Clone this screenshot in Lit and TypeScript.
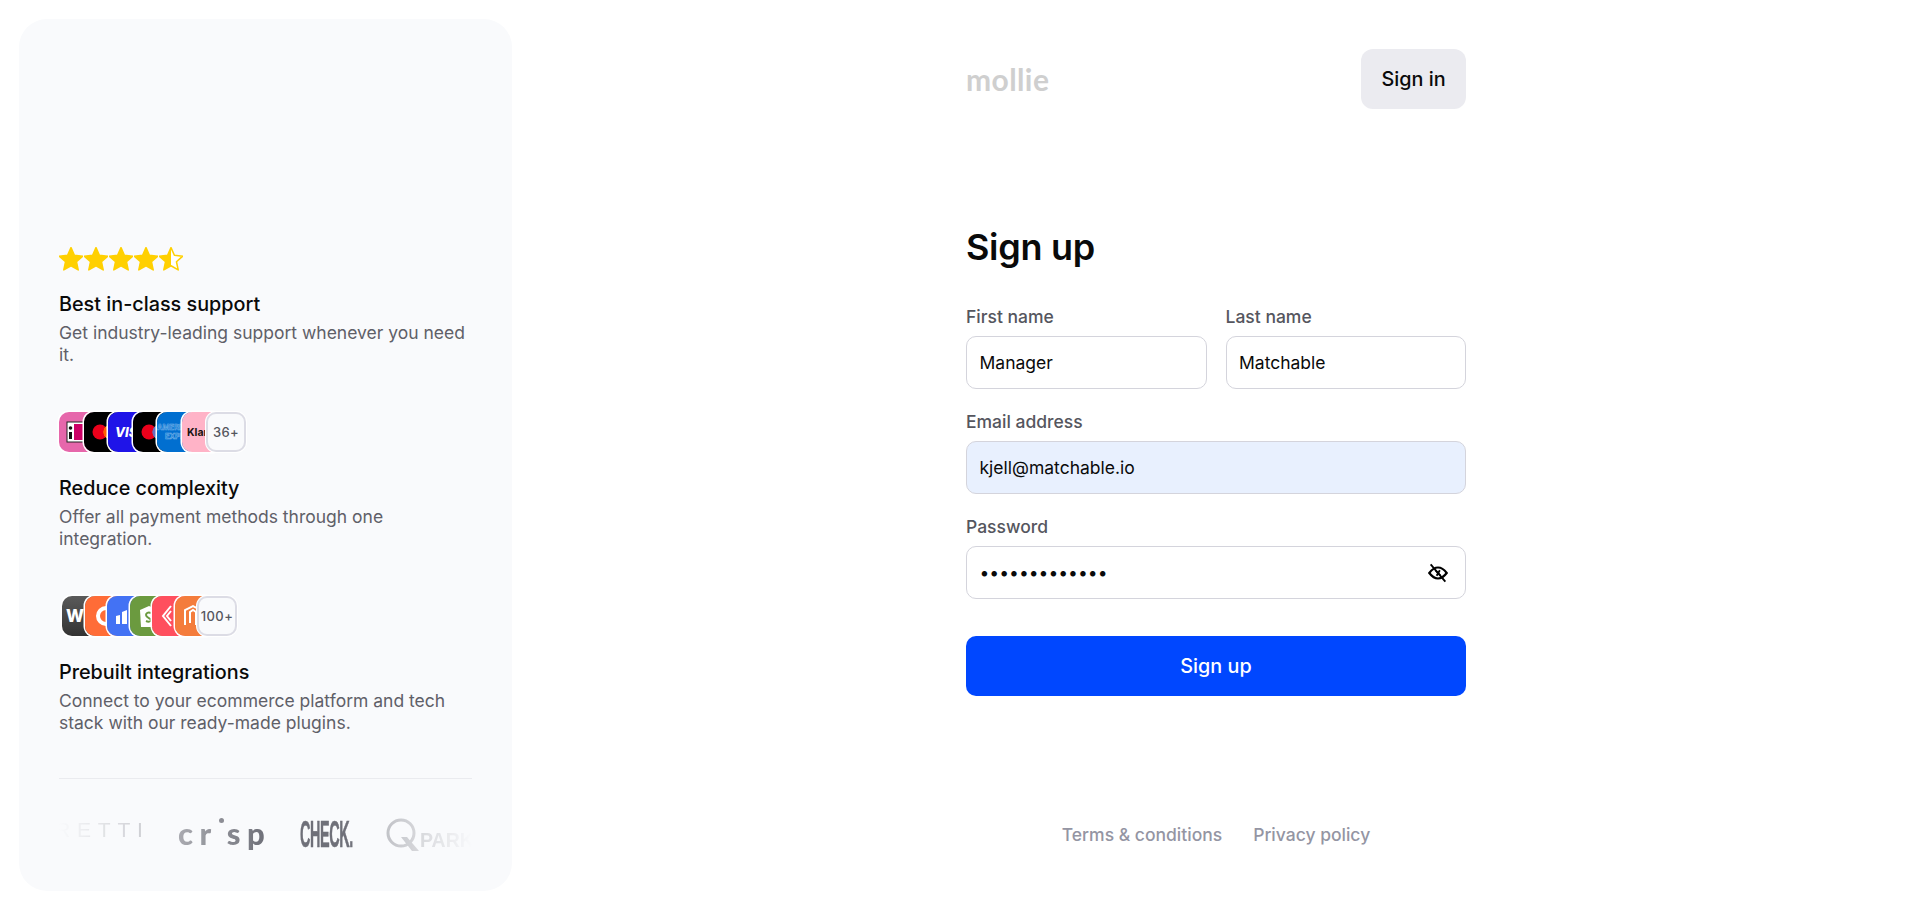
import { LitElement, html, css, svg } from "lit";
import { customElement } from "lit/decorators.js";

const star = (fill: string) => svg`<path d="M12 1.600l3.100 7 7.600.8-5.700 5.100 1.600 7.500L12 18.200 5.400 22l1.600-7.500L1.300 9.400l7.600-.8z" fill="${fill}" stroke="#ffd000" stroke-width="1.400" stroke-linejoin="round"/>`;

@customElement("app-root")
export class AppRoot extends LitElement {
  static styles = css`
    :host { display: block; font-family: Inter, "Liberation Sans", sans-serif; color: #0a0a0a; background: #fff; height: 907px; }
    * { box-sizing: border-box; }
    .page { display: flex; height: 907px; padding: 19px 0 16px 19px; }
    .side { width: 493px; flex: none; background: #f9fafc; border-radius: 28px; padding: 0 40px 0 40px; display: flex; flex-direction: column; }
    .feature { display: flex; flex-direction: column; }
    .feature.first { margin-top: 228px; }
    .feature + .feature { margin-top: 46px; }
    .stars { display: flex; gap: 1px; height: 24px; }
    .stars svg { width: 24px; height: 24px; }
    .title { font-size: 19.800px; font-weight: 500; line-height: 28px; margin-top: 19px; }
    .desc { font-size: 17.500px; line-height: 22px; color: #5f6068; margin-top: 4px; }
    .chips { display: flex; height: 40px; margin-bottom: 3px; }
    .chips.ints { padding-left: 3px; }
    .chip { width: 40px; height: 40px; border-radius: 10px; overflow: hidden; flex: none; position: relative; display: flex; align-items: center; box-shadow: 0 0 0 1.500px #fff; font-weight: 700; color: #fff; }
    .chips.pay .chip + .chip { margin-left: -15.500px; }
    .chips.ints .chip + .chip { margin-left: -17.500px; }
    .chip svg { width: 40px; height: 40px; display: block; }
    .chip.more { background: #f9fafc; box-shadow: inset 0 0 0 2px #dcdce5, 0 0 0 1px #fff; color: #55565e; font-size: 13px; font-weight: 500; justify-content: center; letter-spacing: .4px; }
    .rule { height: 1px; background: #eaebef; margin-top: 44px; }
    .logos { margin-top: 31px; height: 46px; display: flex; align-items: center; overflow: hidden; color: #6f7079; -webkit-mask-image: linear-gradient(90deg, transparent 0, #000 50%, #000 70%, transparent 100%); mask-image: linear-gradient(90deg, transparent 0, #000 50%, #000 70%, transparent 100%); }
    .retti { font-family: "Liberation Sans", sans-serif; font-size: 21px; letter-spacing: 6.800px; width: 123px; flex: none; margin-left: -4px; color: #8f9098; margin-top: -6px; }
    .crisp { font-family: Lato, sans-serif; font-size: 31px; font-weight: 900; letter-spacing: 6.500px; width: 122px; flex: none; position: relative; line-height: 1; }
    .crisp i { position: absolute; width: 5px; height: 5px; border-radius: 50%; background: currentColor; left: 41px; top: 0; }
    .crisp span { margin-left: 9px; }
    .check { font-family: "Liberation Sans", sans-serif; font-size: 37px; font-weight: 700; letter-spacing: -1px; transform: scaleX(.39); transform-origin: left; width: 86px; flex: none; white-space: nowrap; -webkit-text-stroke: .6px currentColor; margin-top: 4px; }
    .qpark { display: flex; align-items: flex-end; flex: none; color: #a9aab0; font-family: "Liberation Sans", sans-serif; font-size: 19.500px; font-weight: 700; margin-top: 4px; }
    .qpark svg { width: 34px; height: 34px; }
    .qpark span { line-height: 24px; }
    .main { flex: 1; display: flex; justify-content: center; }
    .col { width: 500px; margin-left: 3px; display: flex; flex-direction: column; }
    .head { display: flex; justify-content: space-between; align-items: center; margin-top: 30px; height: 60px; }
    .logo { font-family: Lato, sans-serif; font-size: 30px; font-weight: 700; color: #cfcfcf; letter-spacing: .4px; line-height: 1; }
    .signin { width: 105px; height: 60px; border: 0; border-radius: 12px; background: #ebebf0; font: 500 19.800px Inter, sans-serif; color: #0a0a0a; padding: 0; }
    h1 { margin: 0; margin-top: 114px; font-size: 36px; line-height: 48px; font-weight: 600; letter-spacing: -.3px; }
    form { display: flex; flex-direction: column; margin-top: 34px; }
    .row { display: flex; gap: 19px; }
    .row .field { flex: 1; min-width: 0; }
    .field { display: flex; flex-direction: column; margin-bottom: 21px; position: relative; }
    label { font-size: 17.500px; font-weight: 500; line-height: 24px; color: #55565e; margin-bottom: 7px; }
    input { width: 100%; height: 53px; border: 1px solid #d4d4dc; border-radius: 10px; padding: 0 12.500px; font: 400 17.500px Inter, sans-serif; color: #0a0a0a; background: #fff; outline: none; }
    input.filled { background: #e8f0fe; }
    .eye { position: absolute; right: 17px; bottom: 15px; width: 22px; height: 22px; }
    .submit { height: 60px; margin-top: 16px; border: 0; border-radius: 10px; background: #0047ff; color: #fff; font: 500 19.800px Inter, sans-serif; }
    .foot { display: flex; justify-content: center; gap: 31px; margin-top: 127px; font-size: 17.500px; font-weight: 500; color: #9495a3; line-height: 24px; }
  `;

  render() {
    return html`<div class="page">
      <aside class="side">
        <section class="feature first">
          <div class="stars">
            ${[0, 1, 2, 3].map(() => html`<svg viewBox="1 1 22 22">${star("#ffd000")}</svg>`)}
            <svg viewBox="1 1 22 22"><defs><linearGradient id="h"><stop offset="50%" stop-color="#ffd000"/><stop offset="50%" stop-color="#fff"/></linearGradient></defs>${star("url(#h)")}</svg>
          </div>
          <div class="title">Best in-class support</div>
          <div class="desc">Get industry-leading support whenever you need it.</div>
        </section>
        <section class="feature">
          <div class="chips pay">
            <div class="chip"><svg viewBox="0 0 40 40"><rect width="40" height="40" fill="#e667ab"/><rect x="8" y="10" width="20" height="20" fill="#fff" stroke="#222"/><rect x="10" y="20" width="3" height="7" fill="#111"/><circle cx="11.500" cy="16" r="1.800" fill="#111"/><rect x="15" y="12" width="12" height="16" fill="#cc0066"/></svg></div>
            <div class="chip"><svg viewBox="0 0 40 40"><rect width="40" height="40" fill="#000"/><circle cx="16" cy="20" r="7.500" fill="#eb001b"/><circle cx="27" cy="20" r="7.500" fill="#f79e1b"/><path d="M21.500 14.900a7.500 7.500 0 0 1 0 10.200 7.500 7.500 0 0 1 0-10.200z" fill="#ff5f00"/></svg></div>
            <div class="chip"><svg viewBox="0 0 40 40"><rect width="40" height="40" fill="#1f14e8"/><text x="7" y="25" font-size="13" font-weight="800" font-style="italic" fill="#fff" font-family="Inter">VISA</text></svg></div>
            <div class="chip"><svg viewBox="0 0 40 40"><rect width="40" height="40" fill="#000"/><circle cx="16" cy="20" r="7.500" fill="#eb001b"/><circle cx="27" cy="20" r="7.500" fill="#3a9bdc"/><path d="M21.500 14.900a7.500 7.500 0 0 1 0 10.200 7.500 7.500 0 0 1 0-10.200z" fill="#6c6bbd"/></svg></div>
            <div class="chip"><svg viewBox="0 0 40 40"><rect width="40" height="40" fill="#016fd0"/><text x="0" y="18" font-size="7.500" font-weight="700" fill="none" stroke="#7db7ea" stroke-width=".5" font-family="Inter">AMERICAN</text><text x="8" y="27" font-size="7.500" font-weight="700" fill="none" stroke="#7db7ea" stroke-width=".5" font-family="Inter">EXPRESS</text></svg></div>
            <div class="chip"><svg viewBox="0 0 40 40"><rect width="40" height="40" fill="#ffb3c7"/><text x="5" y="24" font-size="10.500" font-weight="700" fill="#17120f" font-family="Inter">Klarna</text></svg></div>
            <div class="chip more">36+</div>
          </div>
          <div class="title">Reduce complexity</div>
          <div class="desc">Offer all payment methods through one integration.</div>
        </section>
        <section class="feature">
          <div class="chips ints">
            <div class="chip"><svg viewBox="0 0 40 40"><defs><linearGradient id="w" x1="0" y1="0" x2="0" y2="1"><stop offset="0" stop-color="#5a5a5a"/><stop offset="1" stop-color="#333"/></linearGradient></defs><rect width="40" height="40" fill="url(#w)"/><text x="4" y="26" font-size="17" font-weight="800" fill="#fff" font-family="Inter">W</text></svg></div>
            <div class="chip"><svg viewBox="0 0 40 40"><rect width="40" height="40" fill="#ff6c37"/><circle cx="21" cy="20" r="8" fill="none" stroke="#fff" stroke-width="4"/></svg></div>
            <div class="chip"><svg viewBox="0 0 40 40"><rect width="40" height="40" fill="#4372f4"/><path d="M9 20l4-1v9H9zM15 16l5-2v14h-5z" fill="#fff"/></svg></div>
            <div class="chip"><svg viewBox="0 0 40 40"><rect width="40" height="40" fill="#6b9a3f"/><path d="M10 14l9-4 7 3 2 18-17 0z" fill="#fff"/><path d="M21 17c-3-1-5 0-5 2 0 3 5 3 5 5 0 2-3 2-5 1" fill="none" stroke="#6b9a3f" stroke-width="2"/></svg></div>
            <div class="chip"><svg viewBox="0 0 40 40"><rect width="40" height="40" fill="#ff4f5e"/><path d="M19 10l-8 10 8 10M19 15l-4 5 4 5" fill="none" stroke="#fff" stroke-width="2"/></svg></div>
            <div class="chip"><svg viewBox="0 0 40 40"><rect width="40" height="40" fill="#f47c3c"/><path d="M10 29V14l8-4 8 4v15M15 27V16l3-2 3 2v13" fill="none" stroke="#fff" stroke-width="2"/></svg></div>
            <div class="chip more">100+</div>
          </div>
          <div class="title">Prebuilt integrations</div>
          <div class="desc">Connect to your ecommerce platform and tech stack with our ready-made plugins.</div>
        </section>
        <div class="rule"></div>
        <div class="logos">
          <div class="retti">RETTI</div>
          <div class="crisp">cr<i></i><span>sp</span></div>
          <div class="check">CHECK.</div>
          <div class="qpark"><svg viewBox="0 0 34 34"><circle cx="15" cy="15" r="13" fill="none" stroke="currentColor" stroke-width="3"/><path d="M15 19h6l12 14h-7z" fill="currentColor"/></svg><span>PARK</span></div>
        </div>
      </aside>
      <main class="main">
        <div class="col">
          <header class="head">
            <div class="logo">mollie</div>
            <button class="signin">Sign in</button>
          </header>
          <h1>Sign up</h1>
          <form>
            <div class="row">
              <div class="field"><label>First name</label><input value="Manager" /></div>
              <div class="field"><label>Last name</label><input value="Matchable" /></div>
            </div>
            <div class="field"><label>Email address</label><input class="filled" value="kjell@matchable.io" /></div>
            <div class="field">
              <label>Password</label><input type="password" value="abcdefghijklm" />
              <svg class="eye" viewBox="0 0 24 24" fill="none" stroke="#000" stroke-width="2.400"><path d="M2.500 12c3-4 6-6 9.500-6s6.500 2 9.500 6c-3 4-6 6-9.500 6s-6.500-2-9.500-6z"/><path d="M9.500 9.500l5 5M14 9l-3.500 6" stroke-width="2"/><path d="M4 2.500l16 19" stroke-width="2"/></svg>
            </div>
            <button class="submit" type="button">Sign up</button>
          </form>
          <footer class="foot"><span>Terms &amp; conditions</span><span>Privacy policy</span></footer>
        </div>
      </main>
    </div>`;
  }
}
